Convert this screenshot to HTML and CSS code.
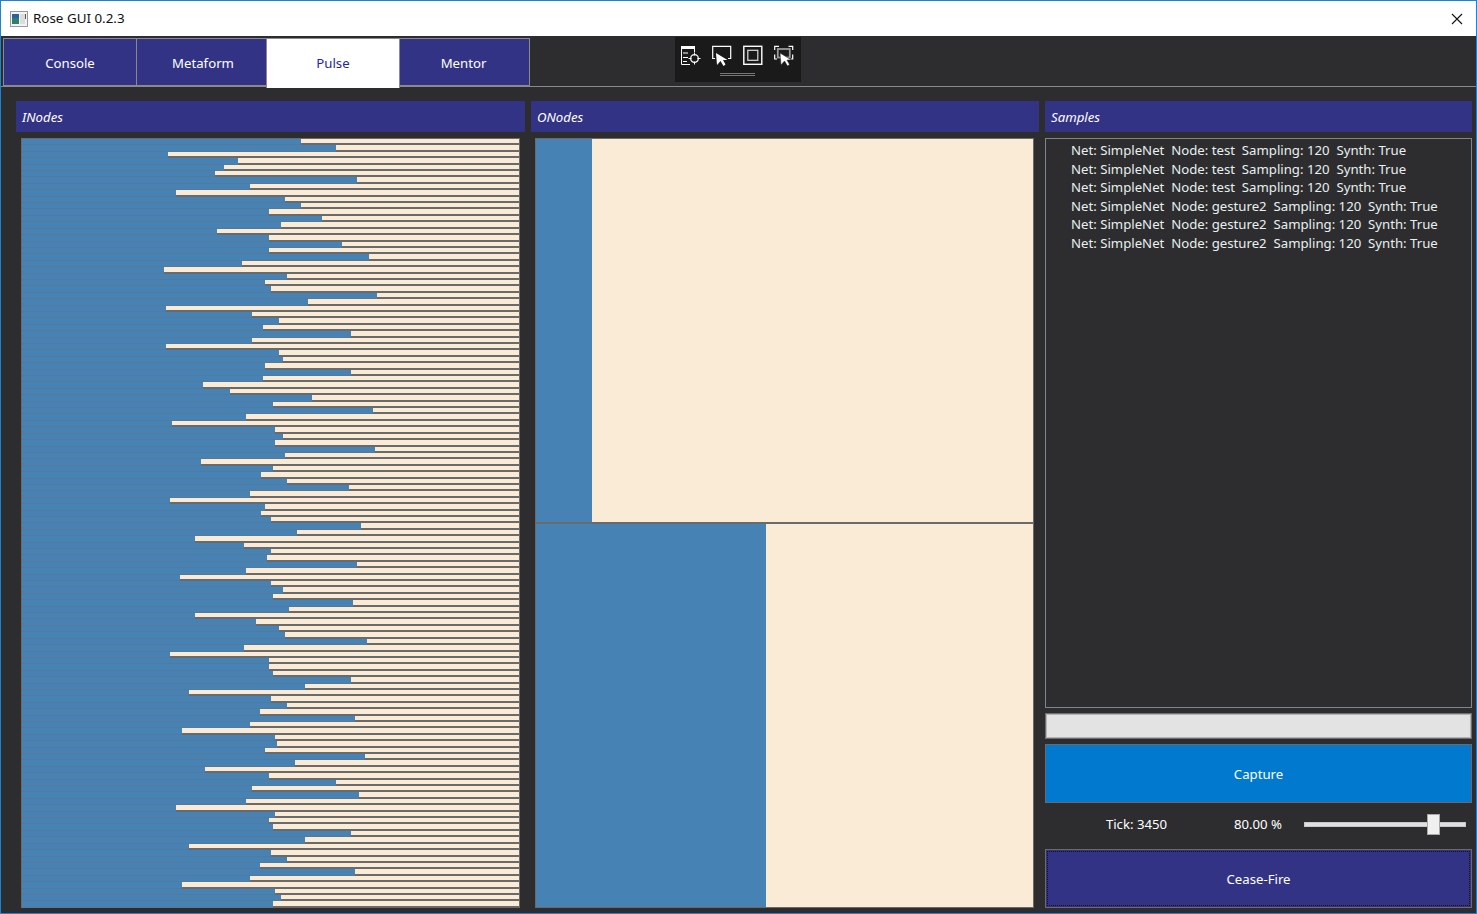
FILE: index.html
```html
<!DOCTYPE html>
<html lang="en">

<head>
    <meta charset="UTF-8">
    <title>Rose GUI 0.2.3</title>
    <link rel="stylesheet" href="styles.css">
</head>

<body>
    <div class="window">
        <div class="titlebar">
            <svg class="app-icon" width="18" height="16" viewBox="0 0 18 16">
                <rect x="0.5" y="0.5" width="17" height="15" fill="#f2f2f2" stroke="#9a9a9a"/>
                <rect x="2" y="3" width="7" height="10" fill="#2f7f6f"/>
                <rect x="2" y="3" width="7" height="4" fill="#2d5f9a"/>
                <rect x="10" y="3" width="5" height="10" fill="#dcdcdc"/>
                <rect x="15" y="3" width="1" height="5" fill="#555"/>
            </svg>
            <span class="title-text">Rose GUI 0.2.3</span>
            <svg class="close-icon" width="12" height="12" viewBox="0 0 12 12">
                <path d="M1 1 L11 11 M11 1 L1 11" stroke="#111" stroke-width="1.1" fill="none"/>
            </svg>
        </div>

        <div class="tabstrip">
            <div class="tab tab-console">Console</div>
            <div class="tab tab-metaform">Metaform</div>
            <div class="tab tab-pulse active">Pulse</div>
            <div class="tab tab-mentor">Mentor</div>

            <div class="devbar">
                <div class="devbar-icons">
                    <svg class="dev-first" width="22" height="22" viewBox="0 0 22 22" fill="none" stroke="#fff">
                        <path d="M10 19.5 H1.5 V1.5 H14.5 V7"/>
                        <rect x="1" y="1" width="14" height="3" fill="#fff" stroke="none"/>
                        <path d="M3 8 H8 M3 12.5 H8 M3 16.5 H7"/>
                        <circle cx="14.5" cy="13.5" r="3.8" stroke-width="1.3"/>
                        <path d="M14.5 7.5 V10.5 M14.5 16.5 V19.5 M8.5 13.5 H11.5 M17.5 13.5 H20.5"/>
                    </svg>
                    <svg width="22" height="22" viewBox="0 0 22 22" fill="none" stroke="#fff">
                        <path d="M3 13.5 H0.7 V1.3 H18.7 V13.5 H16" stroke-width="1.2"/>
                        <path d="M4 8 L5 20 L8.5 16 L11.5 21 L13.5 19.5 L11 15 H15.5 Z" fill="#fff" stroke="none"/>
                    </svg>
                    <svg width="22" height="22" viewBox="0 0 22 22" fill="none" stroke="#fff">
                        <rect x="0.8" y="1.3" width="18" height="18" stroke-width="1.4"/>
                        <rect x="4.8" y="5.3" width="10" height="10" stroke="#ddd" stroke-width="1.2"/>
                    </svg>
                    <svg width="22" height="22" viewBox="0 0 22 22" fill="none" stroke="#fff">
                        <path d="M0.7 5 V1.3 H5 M14.5 1.3 H18.7 V5 M0.7 9.5 V14 H3 M18.7 9.5 V14 H17" stroke-width="1.2"/>
                        <rect x="3.8" y="4" width="12" height="8.5" stroke="#999" stroke-width="1.8"/>
                        <path d="M6 8 L7 20 L10.5 16 L13.5 21 L15.5 19.5 L13 15 H17.5 Z" fill="#fff" stroke="#1a1a1a" stroke-width="0.5"/>
                    </svg>
                </div>
                <div class="devbar-grip"></div>
            </div>
        </div>

        <div class="content">
            <div class="panel-head">INodes</div>
            <div class="panel-head">ONodes</div>
            <div class="panel-head">Samples</div>

            <div class="inodes" id="inodes"></div>

            <div class="onodes">
                <div class="bar"><div class="fill fill-first"></div></div>
                <div class="bar"><div class="fill fill-second"></div></div>
            </div>

            <div class="samples">
                <div class="sample-list">
                    <div class="sample">Net: SimpleNet&nbsp; Node: test&nbsp; Sampling: 120&nbsp; Synth: True</div>
                    <div class="sample">Net: SimpleNet&nbsp; Node: test&nbsp; Sampling: 120&nbsp; Synth: True</div>
                    <div class="sample">Net: SimpleNet&nbsp; Node: test&nbsp; Sampling: 120&nbsp; Synth: True</div>
                    <div class="sample">Net: SimpleNet&nbsp; Node: gesture2&nbsp; Sampling: 120&nbsp; Synth: True</div>
                    <div class="sample">Net: SimpleNet&nbsp; Node: gesture2&nbsp; Sampling: 120&nbsp; Synth: True</div>
                    <div class="sample">Net: SimpleNet&nbsp; Node: gesture2&nbsp; Sampling: 120&nbsp; Synth: True</div>
                </div>
                <div class="name-box"></div>
                <div class="btn btn-capture">Capture</div>
                <div class="status-row">
                    <span class="tick">Tick: 3450</span>
                    <span class="percent">80.00 %</span>
                    <div class="slider"><div class="thumb"></div></div>
                </div>
                <div class="btn btn-cease"><div class="focus-ring">Cease-Fire</div></div>
            </div>
        </div>
    </div>

    <script src="pulse.js"></script>
</body>

</html>
```

FILE: styles.css
```css
* {
    padding: 0;
    margin: 0;
    box-sizing: border-box;
}

html, body {
    height: 100%;
    overflow: hidden;
}

body {
    font-family: "Noto Sans", "Open Sans", sans-serif;
    font-size: 13.2px;
    color: #fff;
}

.window {
    height: 914px;
    display: flex;
    flex-direction: column;
    background-color: #2d2d30;
    border: 1px solid #1883d7;
}

.titlebar {
    height: 35px;
    flex: none;
    background-color: #fff;
    color: #111;
    display: flex;
    align-items: center;
    padding: 0 13px 0 9px;
}

.title-text {
    margin: 0 0 2px 5px;
    flex: 1;
    font-size: 13.4px;
}

.tabstrip {
    height: 51px;
    flex: none;
    display: flex;
    align-items: flex-start;
    padding: 2px 0 0 2px;
    border-bottom: 1px solid #8a8a8a;
    position: relative;
}

.tab {
    height: 48px;
    background-color: #333385;
    border: 1px solid #8a8a8a;
    margin-right: -1px;
    padding-top: 1px;
    display: flex;
    align-items: center;
    justify-content: center;
}

.tab-console { width: 134px; }
.tab-metaform { width: 131px; padding-left: 3px; }
.tab-pulse { width: 134px; }
.tab-mentor { width: 131px; padding-right: 2px; }

.tab.active {
    height: 50px;
    background-color: #fff;
    color: #2a1f9c;
    border-bottom: none;
    padding: 0 0 2px;
    position: relative;
}

.devbar {
    position: absolute;
    left: 674px;
    top: 1px;
    width: 126px;
    height: 45px;
    background-color: #1a1a1a;
    display: flex;
    flex-direction: column;
    padding: 8px 0 0 5px;
}

.devbar-icons {
    display: flex;
    gap: 9px;
}

.dev-first {
    margin-right: 1px;
}

.devbar-grip {
    width: 35px;
    height: 3px;
    margin: 6px 0 0 40px;
    border-top: 1px solid #777;
    border-bottom: 1px solid #777;
}

.content {
    flex: 1;
    min-height: 0;
    display: grid;
    grid-template-columns: 509px 508px 427px;
    grid-template-rows: 31px 1fr;
    column-gap: 6px;
    row-gap: 6px;
    padding: 14px 0 5px 15px;
}

.panel-head {
    background-color: #333385;
    font-style: italic;
    display: flex;
    align-items: center;
    padding-left: 6px;
}

.inodes {
    margin: 0 5px;
    display: flex;
    flex-direction: column;
    width: 499px;
    background-color: #6a6a6a;
    border: 1px solid #6a6a6a;
}

.inodes .row {
    flex: 1;
    min-height: 0;
    display: flex;
    background-color: #6a6a6a;
}

.inodes .row-fill {
    flex: none;
    background-color: #4682b4;
    border-bottom: 1px solid #56799a;
}

.inodes .row-rest {
    flex: 1;
    background-color: #faebd7;
    margin-bottom: 2px;
}

.onodes {
    margin: 0 4px;
    display: flex;
    flex-direction: column;
    width: 499px;
    border: 1px solid #6a6a6a;
    background-color: #6a6a6a;
}

.bar {
    flex: 1;
    background-color: #faebd7;
    display: flex;
}

.bar + .bar {
    margin-top: 2px;
}

.fill {
    background-color: #4682b4;
}

.fill-first { width: 56px; }
.fill-second { width: 230px; }

.samples {
    display: flex;
    flex-direction: column;
    min-height: 0;
}

.sample-list {
    height: 570px;
    border: 1px solid #7f8590;
    padding: 2px 0 0 25px;
    color: #e8f0ee;
}

.sample {
    height: 18.6px;
    line-height: 18.6px;
    white-space: nowrap;
}

.name-box {
    height: 26px;
    margin-top: 5px;
    background-color: #e3e3e3;
    border: 1px solid #6e6e6e;
    box-shadow: inset 0 0 0 1px #b4b4b4;
}

.btn {
    display: flex;
    align-items: center;
    justify-content: center;
    border: 1px solid #6a6a6a;
}

.btn-capture {
    height: 59px;
    margin-top: 5px;
    background-color: #0079cf;
}

.status-row {
    height: 46px;
    display: flex;
    align-items: center;
    padding-bottom: 3px;
}

.tick {
    width: 183px;
    margin-bottom: 2px;
    text-align: center;
}

.percent {
    width: 60px;
    margin-bottom: 2px;
    text-align: center;
}

.slider {
    width: 162px;
    margin-left: 16px;
    height: 5px;
    background-color: #e0e0e0;
    border: 1px solid #c8c8c8;
    position: relative;
}

.thumb {
    position: absolute;
    left: 122px;
    top: -9px;
    width: 13px;
    height: 21px;
    background-color: #f0f0f0;
    border: 1px solid #a8a8a8;
}

.btn-cease {
    height: 59px;
    background-color: #333385;
    padding: 1px;
}

.focus-ring {
    width: 100%;
    height: 100%;
    display: flex;
    align-items: center;
    justify-content: center;
    border: 1px dotted #111;
}
```

FILE: pulse.js
```js
// blue width of every input node, in px from the left of the row
const values = [
    279, 314, 146, 216, 202, 193, 335, 228, 154, 263, 279, 247, 300, 259, 195, 247, 320, 247, 347, 220,
    142, 265, 243, 249, 355, 286, 144, 230, 257, 241, 329, 230, 144, 257, 261, 243, 329, 241, 181, 208,
    290, 251, 351, 224, 150, 253, 261, 253, 353, 263, 179, 251, 239, 265, 327, 228, 148, 243, 239, 249,
    339, 275, 173, 222, 249, 245, 335, 224, 158, 249, 261, 251, 331, 267, 173, 234, 257, 263, 345, 222,
    148, 247, 247, 251, 329, 283, 167, 249, 265, 238, 333, 228, 160, 253, 255, 243, 343, 273, 183, 247,
    314, 230, 337, 224, 154, 253, 247, 251, 329, 283, 167, 249, 265, 238, 333, 228, 160, 253, 259, 251
];

const inodes = document.getElementById('inodes');

values.forEach(value => {
    const row = document.createElement('div');
    row.className = 'row';

    const fill = document.createElement('div');
    fill.className = 'row-fill';
    fill.style.width = value + 'px';

    const rest = document.createElement('div');
    rest.className = 'row-rest';

    row.appendChild(fill);
    row.appendChild(rest);
    inodes.appendChild(row);
});
```
